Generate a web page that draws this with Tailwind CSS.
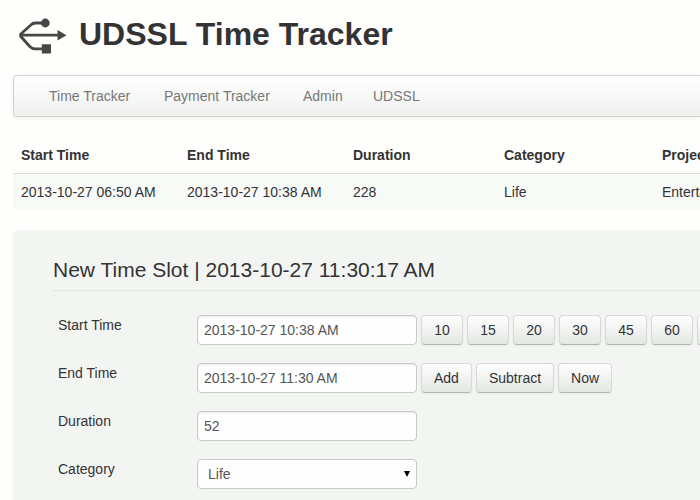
<!DOCTYPE html>
<html lang="en">
<head>
<meta charset="utf-8">
<meta name="viewport" content="width=device-width, initial-scale=1">
<title>UDSSL Time Tracker</title>
<script src="https://cdn.jsdelivr.net/npm/@tailwindcss/browser@4"></script>
</head>
<body class="overflow-hidden bg-[#fefefd] pl-[13px] font-['Liberation_Sans',Arial,sans-serif] text-sm leading-5 text-[#333]">
<header class="flex h-[75px] items-start pt-3.5">
  <svg class="mt-0.5 ml-1 h-10 w-[52px] shrink-0" viewBox="0 0 52 40" fill="none" stroke="#454844" stroke-width="2.8" stroke-linejoin="round" aria-hidden="true">
    <path d="M28 7H18.500Q15.800 7 13.800 9L3.600 18.200V20.200L12.800 30.500Q15 32.800 18 32.800H26"/>
    <path d="M3 19.200H42"/>
    <circle cx="28.300" cy="7" r="4.400" fill="#454844" stroke="none"/>
    <path d="M24.800 28.200h9.200v9.200h-9.200zM40.500 14l9 5.200-9 5.300z" fill="#454844" stroke="none"/>
  </svg>
  <h1 class="ml-2.5 text-[32px] leading-10 font-bold whitespace-nowrap">UDSSL Time Tracker</h1>
</header>

<nav aria-label="Main" class="grid h-[42px] grid-cols-[115px_139px_70px_auto] items-center rounded-l-sm border border-r-0 border-[#d0d3d0] bg-linear-to-b from-[#fefffe] to-[#eff1ef] pl-[35px] whitespace-nowrap text-[#777] shadow-[0_1px_4px_rgba(0,0,0,0.065)]">
  <a href="#time">Time Tracker</a>
  <a href="#payment">Payment Tracker</a>
  <a href="#admin">Admin</a>
  <a href="#udssl">UDSSL</a>
</nav>

<main>
  <div class="mt-5 overflow-hidden">
    <table class="table-fixed w-full min-w-[780px] border-separate border-spacing-0 text-left whitespace-nowrap">
      <colgroup><col class="w-[166px]"><col class="w-[166px]"><col class="w-[151px]"><col class="w-[158px]"><col></colgroup>
      <thead>
        <tr>
          <th class="p-2">Start Time</th>
          <th class="p-2">End Time</th>
          <th class="p-2">Duration</th>
          <th class="p-2">Category</th>
          <th class="p-2">Project</th>
        </tr>
      </thead>
      <tbody>
        <tr class="bg-[#f8faf8]">
          <td class="border-t border-[#d9dcd9] p-2">2013-10-27 06:50 AM</td>
          <td class="border-t border-[#d9dcd9] p-2">2013-10-27 10:38 AM</td>
          <td class="border-t border-[#d9dcd9] p-2">228</td>
          <td class="border-t border-[#d9dcd9] p-2">Life</td>
          <td class="border-t border-[#d9dcd9] p-2">Entertainment</td>
        </tr>
      </tbody>
    </table>
  </div>

  <form class="mt-5 rounded-tl-md bg-[#f3f5f3] pt-5 pb-10 pl-10">
    <h2 class="mb-6 border-b border-[#e3e5e3] text-[21px] leading-10 whitespace-nowrap">New Time Slot | 2013-10-27 11:30:17 AM</h2>
    <div class="grid grid-cols-[139px_1fr] gap-y-[18px] pl-[5px]">
      <label for="start">Start Time</label>
      <div class="flex gap-1">
        <input id="start" type="text" value="2013-10-27 10:38 AM" class="h-[30px] w-[220px] shrink-0 rounded-sm border border-[#c8cac8] bg-[#fefefe] px-1.5 text-[#555] shadow-[inset_0_1px_1px_rgba(0,0,0,0.075)]">
        <button type="button" class="h-[30px] min-w-[42px] rounded-sm border border-[#d7dad7] border-b-[#b3b5b3] bg-linear-to-b from-[#fefffe] to-[#e4e7e4] px-3 shadow-[0_1px_2px_rgba(0,0,0,0.05)]">10</button>
        <button type="button" class="h-[30px] min-w-[42px] rounded-sm border border-[#d7dad7] border-b-[#b3b5b3] bg-linear-to-b from-[#fefffe] to-[#e4e7e4] px-3 shadow-[0_1px_2px_rgba(0,0,0,0.05)]">15</button>
        <button type="button" class="h-[30px] min-w-[42px] rounded-sm border border-[#d7dad7] border-b-[#b3b5b3] bg-linear-to-b from-[#fefffe] to-[#e4e7e4] px-3 shadow-[0_1px_2px_rgba(0,0,0,0.05)]">20</button>
        <button type="button" class="h-[30px] min-w-[42px] rounded-sm border border-[#d7dad7] border-b-[#b3b5b3] bg-linear-to-b from-[#fefffe] to-[#e4e7e4] px-3 shadow-[0_1px_2px_rgba(0,0,0,0.05)]">30</button>
        <button type="button" class="h-[30px] min-w-[42px] rounded-sm border border-[#d7dad7] border-b-[#b3b5b3] bg-linear-to-b from-[#fefffe] to-[#e4e7e4] px-3 shadow-[0_1px_2px_rgba(0,0,0,0.05)]">45</button>
        <button type="button" class="h-[30px] min-w-[42px] rounded-sm border border-[#d7dad7] border-b-[#b3b5b3] bg-linear-to-b from-[#fefffe] to-[#e4e7e4] px-3 shadow-[0_1px_2px_rgba(0,0,0,0.05)]">60</button>
        <button type="button" class="h-[30px] min-w-[42px] rounded-sm border border-[#d7dad7] border-b-[#b3b5b3] bg-linear-to-b from-[#fefffe] to-[#e4e7e4] px-3 shadow-[0_1px_2px_rgba(0,0,0,0.05)]">90</button>
      </div>
      <label for="end">End Time</label>
      <div class="flex gap-1">
        <input id="end" type="text" value="2013-10-27 11:30 AM" class="h-[30px] w-[220px] shrink-0 rounded-sm border border-[#c8cac8] bg-[#fefefe] px-1.5 text-[#555] shadow-[inset_0_1px_1px_rgba(0,0,0,0.075)]">
        <button type="button" class="h-[30px] min-w-[42px] rounded-sm border border-[#d7dad7] border-b-[#b3b5b3] bg-linear-to-b from-[#fefffe] to-[#e4e7e4] px-3 shadow-[0_1px_2px_rgba(0,0,0,0.05)]">Add</button>
        <button type="button" class="h-[30px] min-w-[42px] rounded-sm border border-[#d7dad7] border-b-[#b3b5b3] bg-linear-to-b from-[#fefffe] to-[#e4e7e4] px-3 shadow-[0_1px_2px_rgba(0,0,0,0.05)]">Subtract</button>
        <button type="button" class="h-[30px] min-w-[42px] rounded-sm border border-[#d7dad7] border-b-[#b3b5b3] bg-linear-to-b from-[#fefffe] to-[#e4e7e4] px-3 shadow-[0_1px_2px_rgba(0,0,0,0.05)]">Now</button>
      </div>
      <label for="duration">Duration</label>
      <div class="flex">
        <input id="duration" type="text" value="52" class="h-[30px] w-[220px] rounded-sm border border-[#c8cac8] bg-[#fefefe] px-1.5 text-[#555] shadow-[inset_0_1px_1px_rgba(0,0,0,0.075)]">
      </div>
      <label for="category">Category</label>
      <div class="relative flex w-[220px]">
        <select id="category" class="h-[30px] w-full appearance-none rounded-sm border border-[#c8cac8] bg-[#fefefe] px-2.5 text-[#555]">
          <option>Life</option>
        </select>
        <svg class="pointer-events-none absolute top-3 right-[7px] h-1.5 w-1.5" viewBox="0 0 6 6" aria-hidden="true"><path d="M0 0h6L3 6z" fill="#000"/></svg>
      </div>
    </div>
  </form>
</main>
</body>
</html>
